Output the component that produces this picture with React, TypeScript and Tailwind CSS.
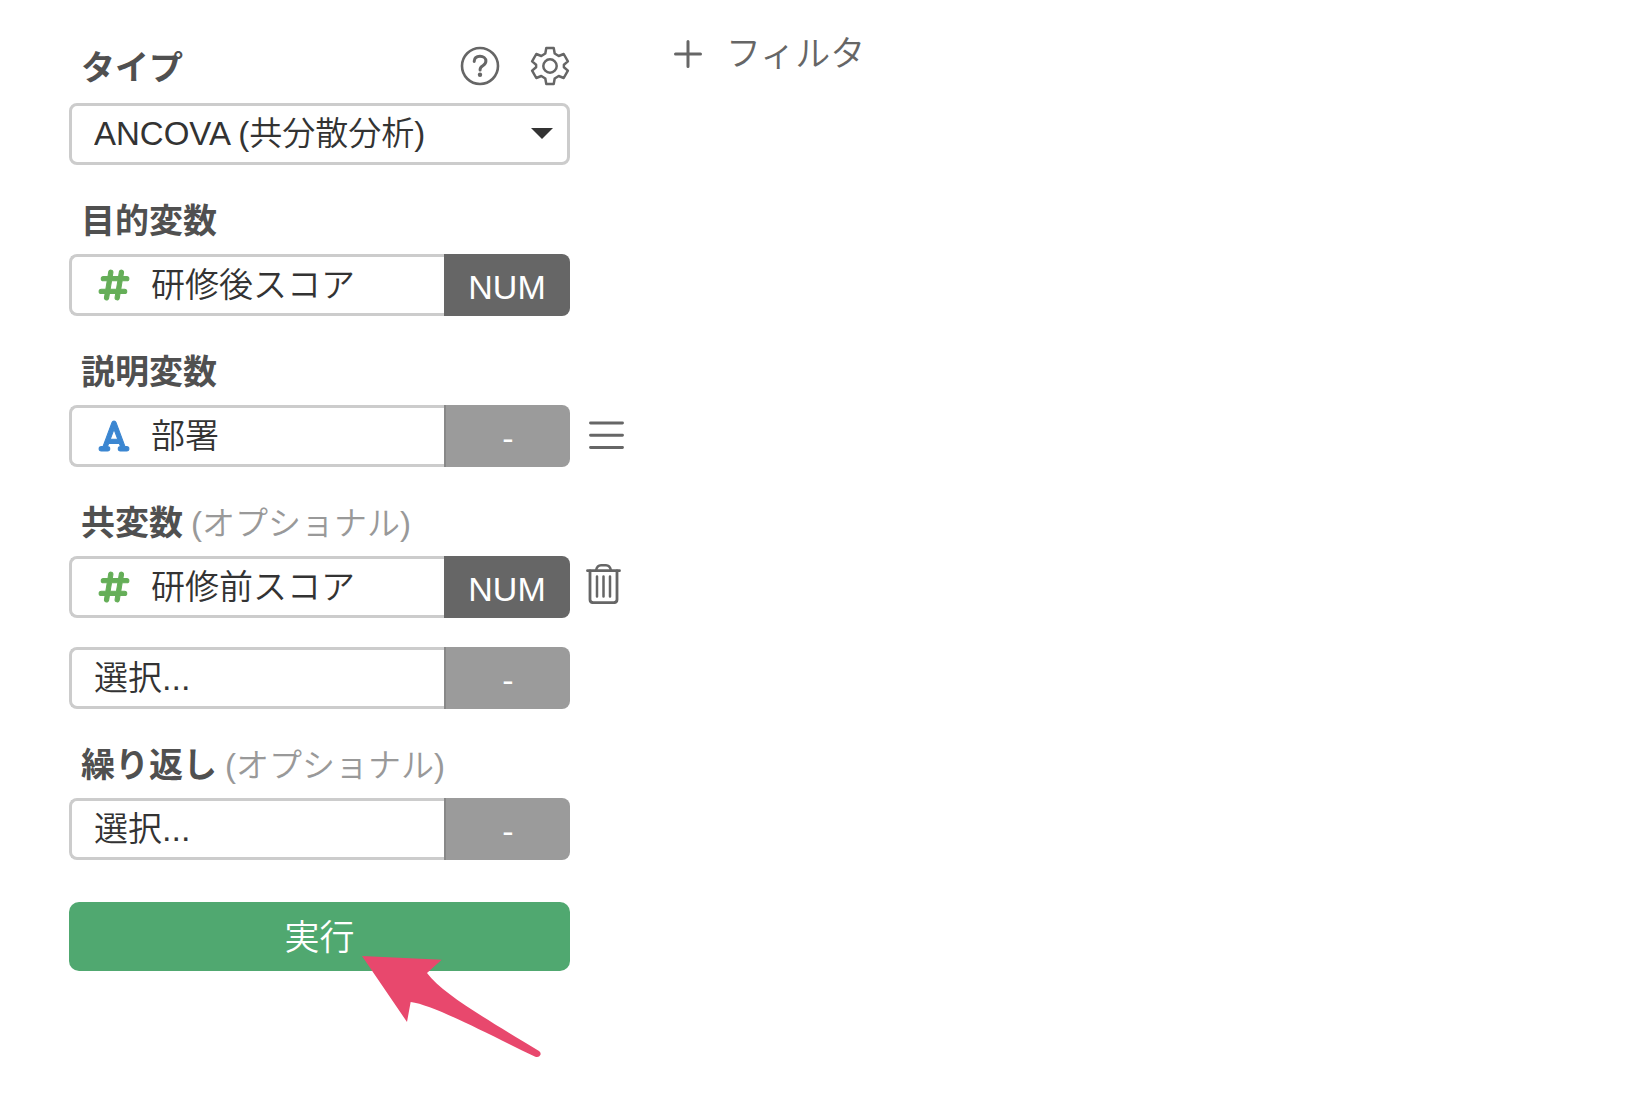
import React, { useState } from 'react';
import { FaFont, FaHashtag } from 'react-icons/fa6';

const HelpIcon: React.FC = () => (
  <svg className="w-10 h-10" fill="none" viewBox="0 0 40 40" stroke="currentColor" strokeWidth={2.6} strokeLinecap="round">
    <circle cx="20" cy="20" r="18" />
    <path d="M14.2 15.4c.1-3.200 2.400-5.100 5.800-5.100 3.400 0 5.900 1.900 5.900 4.800 0 2.200-1.100 3.400-3.100 4.600-2 1.200-2.700 2.100-2.700 3.900v.5" strokeWidth={3} />
    <circle cx="20" cy="28.700" r="2.200" fill="currentColor" stroke="none" />
  </svg>
);

const GearIcon: React.FC = () => (
  <svg className="w-10 h-10" fill="none" viewBox="0 0 40 40" stroke="currentColor" strokeWidth={2.5} strokeLinejoin="round">
    <path d="M16.300 1.900h7.400l1 5.600L28.700 10l5-2 4.200 7.400-4 3.300v2.600l4 3.300-4.200 7.400-5-2-4 2.500-1 5.600h-7.400l-1-5.600-4-2.500-5 2-4.200-7.400 4-3.300v-2.600l-4-3.300L6.300 8l5 2 4-2.500z" />
    <circle cx="20" cy="20" r="6.700" />
  </svg>
);

const MenuIcon: React.FC = () => (
  <svg className="w-[38px] h-10" fill="none" viewBox="0 0 38 40" stroke="currentColor" strokeWidth={2.9} strokeLinecap="round">
    <path d="M4.500 7h32M4.500 19.300h32M4.500 31.500h32" />
  </svg>
);

const TrashIcon: React.FC = () => (
  <svg className="w-9 h-10" fill="none" viewBox="0 0 36 40" stroke="currentColor" strokeWidth={2.5} strokeLinecap="round">
    <path d="M1.500 6.700h32" strokeWidth={2.8} />
    <path d="M10 6.500c.8-3.700 2.500-5.200 5-5.200h5c2.500 0 4.200 1.500 5 5.200" />
    <path d="M4 7v28.500c0 2 1.400 3.200 3.300 3.200h20.400c1.900 0 3.300-1.200 3.300-3.200V7" strokeWidth={2.8} />
    <path d="M11 12.500v20M17.500 12.500v20M24 12.500v20" />
  </svg>
);

type FieldProps = {
  id: string;
  value: string;
  icon?: 'number' | 'text';
  badge: string;
  action?: React.ReactNode;
};

const Field: React.FC<FieldProps> = ({ id, value, icon, badge, action }) => (
  <div className="flex items-center gap-4">
    <div className="flex h-[62px] w-[501px]">
      <div className="flex flex-1 min-w-0 items-center rounded-l-lg border-[3px] border-r-0 border-[#cccccc] bg-white">
        {icon === 'number' && <FaHashtag className="ml-[27px] h-[34px] w-[30px] shrink-0 overflow-visible stroke-[16] text-[#65ae58]" />}
        {icon === 'text' && <FaFont className="ml-[27px] h-[34px] w-[30px] shrink-0 overflow-visible stroke-[16] text-[#3b86d1]" />}
        <select id={id} className="h-full w-full min-w-0 appearance-none bg-transparent pl-[22px] text-[34px] font-[350] text-[#333333] outline-none">
          <option>{value}</option>
        </select>
      </div>
      <button
        type="button"
        className={`w-[126px] shrink-0 rounded-r-lg pt-1 text-[34px] text-white ${badge === '-' ? 'border-l-2 border-[#888888] bg-[#9b9b9b]' : 'bg-[#666666]'}`}
      >
        {badge}
      </button>
    </div>
    {action}
  </div>
);

const FieldLabel: React.FC<{ htmlFor: string; text: string; optional?: boolean }> = ({ htmlFor, text, optional }) => (
  <label htmlFor={htmlFor} className="mt-[34px] mb-[10px] ml-3 flex h-[45px] items-center gap-2 whitespace-nowrap">
    <span className="text-[34px] font-bold text-[#505050]">{text}</span>
    {optional && <span className="text-[33px] font-[350] text-[#999999]">(オプショナル)</span>}
  </label>
);

export default function App() {
  const [type, setType] = useState('ancova');

  return (
    <div className="min-h-screen w-full bg-white font-['Liberation_Sans','Noto_Sans_CJK_JP',sans-serif] text-[#666666]">
      <main className="flex items-start gap-12">
        {/* Analysis settings */}
        <form className="w-[626px] shrink-0 pt-[45px] pb-10 pl-[69px]" onSubmit={e => e.preventDefault()}>
          <div className="mb-4 flex h-[42px] w-[501px] items-center pl-3">
            <label htmlFor="type" className="pt-1 text-[34px] font-bold text-[#505050]">タイプ</label>
            <div className="ml-auto flex gap-[30px]">
              <button type="button" aria-label="ヘルプ"><HelpIcon /></button>
              <button type="button" aria-label="設定"><GearIcon /></button>
            </div>
          </div>
          <div className="relative h-[62px] w-[501px]">
            <select
              id="type"
              value={type}
              onChange={e => setType(e.target.value)}
              className="h-full w-full appearance-none rounded-lg border-[3px] border-[#cccccc] bg-white pl-[22px] text-[33px] font-[350] text-[#333333] outline-none"
            >
              <option value="ancova">ANCOVA (共分散分析)</option>
            </select>
            <svg className="pointer-events-none absolute top-[25px] right-[17px] h-[11px] w-[22px] text-[#333333]" fill="currentColor" viewBox="0 0 22 11">
              <path d="M0 0h22L11 11z" />
            </svg>
          </div>

          <FieldLabel htmlFor="target" text="目的変数" />
          <Field id="target" icon="number" value="研修後スコア" badge="NUM" />

          <FieldLabel htmlFor="predictor" text="説明変数" />
          <Field
            id="predictor"
            icon="text"
            value="部署"
            badge="-"
            action={<button type="button" aria-label="メニュー"><MenuIcon /></button>}
          />

          <FieldLabel htmlFor="covariate" text="共変数" optional />
          <div className="flex flex-col gap-[29px]">
            <Field
              id="covariate"
              icon="number"
              value="研修前スコア"
              badge="NUM"
              action={<button type="button" aria-label="削除" className="pb-1.5"><TrashIcon /></button>}
            />
            <Field id="covariate-next" value="選択..." badge="-" />
          </div>

          <FieldLabel htmlFor="repeat" text="繰り返し" optional />
          <Field id="repeat" value="選択..." badge="-" />

          {/* Run button with pointer arrow */}
          <div className="relative mt-[42px] w-[501px]">
            <button type="submit" className="h-[69px] w-full rounded-[10px] bg-[#50a870] pt-1 text-[35px] font-[350] text-white">
              実行
            </button>
            <svg className="pointer-events-none absolute top-[54px] left-[293px] h-[102px] w-[179px] text-[#e8486d]" fill="currentColor" viewBox="65 197 537 306">
              <path d="M65 197 304 208 260 248C310 312 420 375 596 482Q603 487 600 494Q596 502 585 499C430 425 280 344 211 335L200 395Z" />
            </svg>
          </div>
        </form>

        {/* Filter */}
        <button type="button" className="mt-7 flex h-[52px] items-center gap-6 text-[35px] font-[350] whitespace-nowrap">
          <svg className="h-7 w-7" fill="none" viewBox="0 0 28 28" stroke="currentColor" strokeWidth={3} strokeLinecap="round">
            <path d="M14 1.500v25M1.500 14h25" />
          </svg>
          フィルタ
        </button>
      </main>
    </div>
  );
}
